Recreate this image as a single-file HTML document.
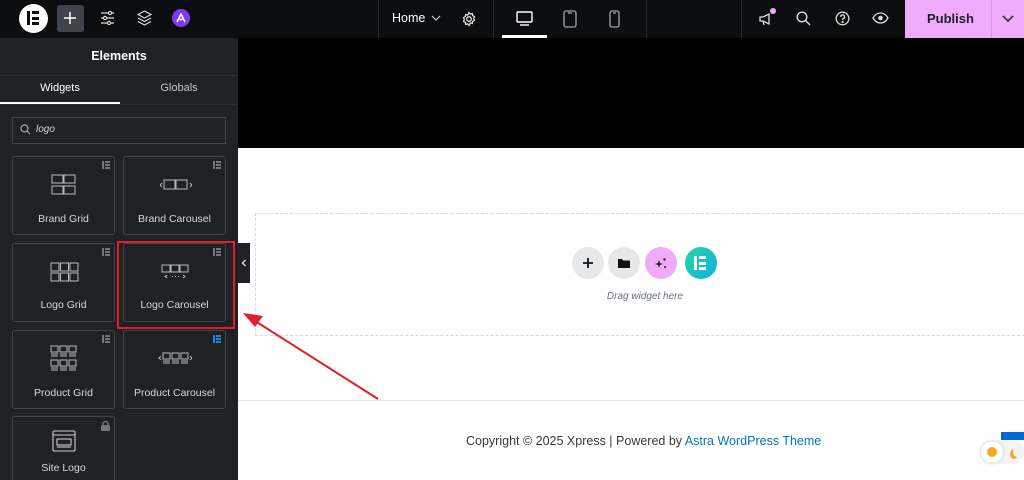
<!DOCTYPE html>
<html style="overflow:hidden;height:480px"><head><meta charset="utf-8"><style>
*{margin:0;padding:0;box-sizing:border-box}
body{width:1024px;height:480px;overflow:hidden;background:#fff;font-family:"Liberation Sans",sans-serif;position:relative}
.a{position:absolute}
.top{left:0;top:0;width:1024px;height:38px;background:#0c0d0e}
.side{left:0;top:38px;width:238px;height:442px;background:#1f2124}
.card{position:absolute;width:103px;border:1px solid #3f444b;border-radius:3px;color:#d5d8dc;font-size:10.5px;text-align:center}
.card .l{position:absolute;left:0;right:0}
.card .b{position:absolute;right:4px;top:4px}
svg{display:block}
</style></head><body>
<div class="a top"></div>
<div class="a" style="left:19px;top:4px;width:29px;height:29px;border-radius:50%;background:#fff"></div>
<div class="a" style="left:27px;top:11px;width:3px;height:14px;background:#0c0d0e"></div>
<div class="a" style="left:32px;top:11px;width:7px;height:3px;background:#0c0d0e"></div>
<div class="a" style="left:32px;top:16.5px;width:7px;height:3px;background:#0c0d0e"></div>
<div class="a" style="left:32px;top:22px;width:7px;height:3px;background:#0c0d0e"></div>
<div class="a" style="left:57px;top:5px;width:27px;height:27px;border-radius:3px;background:#3f444b"></div>
<svg class="a" style="left:63px;top:11px" width="14" height="14"><path d="M7 1v12M1 7h12" stroke="#fff" stroke-width="1.5"/></svg>
<svg class="a" style="left:100px;top:11px" width="15" height="14" fill="none" stroke="#ddd" stroke-width="1.2"><path d="M1 2h13M1 7h13M1 12h13"/><circle cx="10" cy="2" r="1.6" fill="#0c0d0e"/><circle cx="5" cy="7" r="1.6" fill="#0c0d0e"/><circle cx="9" cy="12" r="1.6" fill="#0c0d0e"/></svg>
<svg class="a" style="left:137px;top:10px" width="15" height="16" fill="none" stroke="#ddd" stroke-width="1.2"><path d="M7.5 1L14 4.5 7.5 8 1 4.5z"/><path d="M1 8l6.5 3.5L14 8M1 11.5l6.5 3.5 6.5-3.5"/></svg>
<div class="a" style="left:172px;top:9px;width:18px;height:18px;border-radius:50%;background:#7e3af2"></div>
<svg class="a" style="left:176px;top:13px" width="10" height="10"><path d="M1 9L5 1 9 9M3.5 6.5h3" stroke="#fff" stroke-width="1.6" fill="none"/></svg>
<div class="a" style="left:378px;top:0;width:1px;height:38px;background:#26292c"></div>
<div class="a" style="left:392px;top:11px;color:#fff;font-size:12.5px">Home</div>
<svg class="a" style="left:431px;top:15px" width="10" height="7"><path d="M1 1l4 4 4-4" stroke="#ccc" fill="none" stroke-width="1.2"/></svg>
<svg class="a" style="left:461px;top:11px" width="16" height="16" fill="none" stroke="#ddd" stroke-width="1.3"><circle cx="8" cy="8" r="2.3"/><path d="M8 1.5l1.3 1.6 2-.5.4 2 1.8 1-.9 1.9.9 1.9-1.8 1-.4 2-2-.5L8 14.5l-1.3-1.6-2 .5-.4-2-1.8-1 .9-1.9-.9-1.9 1.8-1 .4-2 2 .5z"/></svg>
<div class="a" style="left:493px;top:0;width:1px;height:38px;background:#26292c"></div>
<svg class="a" style="left:516px;top:11px" width="17" height="15" fill="none" stroke="#fff" stroke-width="1.4"><rect x="1" y="1" width="15" height="10" rx="1"/><path d="M4 14h9"/></svg>
<div class="a" style="left:502px;top:35px;width:45px;height:3px;background:#fff"></div>
<svg class="a" style="left:563px;top:10px" width="14" height="18" fill="none" stroke="#9da5ae" stroke-width="1.3"><rect x="1" y="1" width="12" height="16" rx="2"/><path d="M5 3h4"/></svg>
<svg class="a" style="left:609px;top:10px" width="11" height="18" fill="none" stroke="#9da5ae" stroke-width="1.3"><rect x="1" y="1" width="9" height="16" rx="2"/><path d="M4 3h3"/></svg>
<div class="a" style="left:646px;top:0;width:1px;height:38px;background:#26292c"></div>
<div class="a" style="left:741px;top:0;width:1px;height:38px;background:#26292c"></div>
<svg class="a" style="left:759px;top:11px" width="14" height="15" fill="none" stroke="#ddd" stroke-width="1.3"><path d="M1 6v4h3l6 3V3L4 6z M4 10l1 4"/></svg>
<div class="a" style="left:770px;top:8px;width:6px;height:6px;border-radius:50%;background:#f0abfc"></div>
<svg class="a" style="left:796px;top:11px" width="15" height="15" fill="none" stroke="#ddd" stroke-width="1.4"><circle cx="6" cy="6" r="4.8"/><path d="M9.5 9.5L14 14"/></svg>
<svg class="a" style="left:835px;top:11px" width="15" height="15" fill="none" stroke="#ddd" stroke-width="1.3"><circle cx="7.5" cy="7.5" r="6.3"/><path d="M5.5 5.8a2 2 0 1 1 2.5 2c-.5.2-.5.7-.5 1.3"/><circle cx="7.5" cy="11" r=".5" fill="#ddd"/></svg>
<svg class="a" style="left:872px;top:12px" width="17" height="12" fill="none" stroke="#ddd" stroke-width="1.3"><path d="M1 6c2-3.5 4.5-5 7.5-5s5.5 1.5 7.5 5c-2 3.5-4.5 5-7.5 5S3 9.5 1 6z"/><circle cx="8.5" cy="6" r="1.6" fill="#ddd"/></svg>
<div class="a" style="left:905px;top:0;width:119px;height:38px;background:#f0abfc"></div>
<div class="a" style="left:991px;top:0;width:1px;height:38px;background:#e290ec"></div>
<div class="a" style="left:927px;top:11px;font-size:13px;font-weight:bold;color:#1f1f24">Publish</div>
<svg class="a" style="left:1002px;top:15px" width="12" height="8"><path d="M1 1l5 5 5-5" stroke="#1f1f24" fill="none" stroke-width="1.5"/></svg>

<div class="a" style="left:238px;top:38px;width:786px;height:110px;background:#000"></div>
<div class="a" style="left:255px;top:213px;width:780px;height:123px;border:1px dashed #d5d8dc"></div>
<div class="a" style="left:572px;top:247px;width:32px;height:32px;border-radius:50%;background:#e6e7e8"></div>
<svg class="a" style="left:582px;top:257px" width="12" height="12"><path d="M6 1v10M1 6h10" stroke="#111" stroke-width="1.8"/></svg>
<div class="a" style="left:608px;top:247px;width:32px;height:32px;border-radius:50%;background:#e6e7e8"></div>
<svg class="a" style="left:618px;top:258px" width="12" height="10"><path d="M0 1h4l1 1.5h7V10H0z" fill="#111"/></svg>
<div class="a" style="left:645px;top:247px;width:32px;height:32px;border-radius:50%;background:#f0abfc"></div>
<svg class="a" style="left:655px;top:257px" width="12" height="12" fill="#222"><path d="M4 3l1 3 3 1-3 1-1 3-1-3-3-1 3-1z"/><circle cx="9.5" cy="2.5" r="1.2"/><circle cx="10" cy="10" r="1"/></svg>
<div class="a" style="left:685px;top:247px;width:32px;height:32px;border-radius:50%;background:linear-gradient(135deg,#2bd3a4,#0cb3df)"></div>
<div class="a" style="left:694px;top:256px;width:3px;height:14px;background:#fff"></div>
<div class="a" style="left:699px;top:256px;width:7px;height:3px;background:#fff"></div>
<div class="a" style="left:699px;top:261.5px;width:7px;height:3px;background:#fff"></div>
<div class="a" style="left:699px;top:267px;width:7px;height:3px;background:#fff"></div>
<div class="a" style="left:560px;top:291px;width:170px;text-align:center;font-size:10px;font-style:italic;color:#69727d">Drag widget here</div>
<div class="a" style="left:238px;top:400px;width:786px;height:1px;background:#e5e7eb"></div>
<div class="a" style="left:466px;top:434px;font-size:12.5px;color:#3a3a3a;white-space:nowrap">Copyright © 2025 Xpress | Powered by <span style="color:#0274be">Astra WordPress Theme</span></div>
<div class="a" style="left:1001px;top:432px;width:23px;height:8px;background:#0667d4"></div>
<div class="a" style="left:980px;top:440px;width:44px;height:24px;border-radius:12px;background:#f3f3f3"></div>
<div class="a" style="left:981px;top:441px;width:22px;height:22px;border-radius:50%;background:#fff;box-shadow:0 0 3px #ccc"></div>
<div class="a" style="left:987px;top:447px;width:10px;height:10px;border-radius:50%;background:#f5a623"></div>
<div class="a" style="left:1013px;top:447px;width:8px;height:10px;border-radius:50%;box-shadow:-3px 2px 0 0 #f5a623"></div>

<div class="a side"></div>
<div class="a" style="left:0;top:49px;width:238px;text-align:center;color:#fff;font-weight:bold;font-size:12.5px">Elements</div>
<div class="a" style="left:0;top:75px;width:238px;height:1px;background:#2d3035"></div>
<div class="a" style="left:0;top:82px;width:120px;text-align:center;color:#fff;font-size:11px">Widgets</div>
<div class="a" style="left:120px;top:82px;width:118px;text-align:center;color:#bfc4ca;font-size:11px">Globals</div>
<div class="a" style="left:0;top:102px;width:120px;height:2px;background:#fff"></div>
<div class="a" style="left:0;top:104px;width:238px;height:1px;background:#2d3035"></div>
<div class="a" style="left:12px;top:117px;width:214px;height:27px;border:1px solid #3f444b"></div>
<svg class="a" style="left:20px;top:124px" width="11" height="11" fill="none" stroke="#9da5ae" stroke-width="1.2"><circle cx="4.5" cy="4.5" r="3.5"/><path d="M7 7l3 3"/></svg>
<div class="a" style="left:36px;top:124px;font-size:10px;font-style:italic;color:#d5d8dc">logo</div>

<div class="a" style="left:238px;top:243px;width:12px;height:40px;background:#1f2124"></div>
<svg class="a" style="left:241px;top:259px" width="6" height="8"><path d="M4.5 1L1.5 4l3 3" stroke="#ddd" fill="none" stroke-width="1.4"/></svg>

<div class="card" style="left:12px;top:156px;height:79px"><svg class="b" width="8" height="8" fill="#6d7882"><path d="M0 0h2v8H0zM3 0h5v2H3zM3 3h5v2H3zM3 6h5v2H3z"/></svg>
<svg class="l" style="left:38px;top:17px" width="26" height="22" fill="none" stroke="#bbb" stroke-width="1"><rect x="1" y="1" width="11" height="8"/><rect x="13" y="1" width="11" height="8"/><rect x="1" y="12" width="11" height="8"/><rect x="13" y="12" width="11" height="8"/></svg>
<div class="l" style="top:56px">Brand Grid</div></div>
<div class="card" style="left:123px;top:156px;height:79px"><svg class="b" width="8" height="8" fill="#6d7882"><path d="M0 0h2v8H0zM3 0h5v2H3zM3 3h5v2H3zM3 6h5v2H3z"/></svg>
<svg class="l" style="left:36px;top:22px" width="32" height="12" fill="none" stroke="#bbb" stroke-width="1"><rect x="4" y="1" width="11" height="9"/><rect x="16" y="1" width="11" height="9"/><path d="M2 4L0 6l2 2M30 4l2 2-2 2"/></svg>
<div class="l" style="top:56px">Brand Carousel</div></div>
<div class="card" style="left:12px;top:243px;height:79px"><svg class="b" width="8" height="8" fill="#6d7882"><path d="M0 0h2v8H0zM3 0h5v2H3zM3 3h5v2H3zM3 6h5v2H3z"/></svg>
<svg class="l" style="left:37px;top:18px" width="29" height="20" fill="none" stroke="#bbb" stroke-width="1"><rect x="1" y="1" width="8" height="8"/><rect x="10.5" y="1" width="8" height="8"/><rect x="20" y="1" width="8" height="8"/><rect x="1" y="11" width="8" height="8"/><rect x="10.5" y="11" width="8" height="8"/><rect x="20" y="11" width="8" height="8"/></svg>
<div class="l" style="top:55px">Logo Grid</div></div>
<div class="card" style="left:123px;top:243px;height:79px"><svg class="b" width="8" height="8" fill="#6d7882"><path d="M0 0h2v8H0zM3 0h5v2H3zM3 3h5v2H3zM3 6h5v2H3z"/></svg>
<svg class="l" style="left:37px;top:20px" width="28" height="15" fill="none" stroke="#bbb" stroke-width="1"><rect x="1" y="1" width="8" height="7"/><rect x="10" y="1" width="8" height="7"/><rect x="19" y="1" width="8" height="7"/><path d="M6 11l-2 1.5 2 1.5M22 11l2 1.5-2 1.5M11 12.5h1M14 12.5h1M17 12.5h1"/></svg>
<div class="l" style="top:55px">Logo Carousel</div></div>
<div class="a" style="left:117px;top:241px;width:118px;height:88px;border:2px solid #e31e24"></div>
<div class="card" style="left:12px;top:330px;height:79px"><svg class="b" width="8" height="8" fill="#6d7882"><path d="M0 0h2v8H0zM3 0h5v2H3zM3 3h5v2H3zM3 6h5v2H3z"/></svg>
<svg class="l" style="left:37px;top:14px" width="28" height="28" fill="none" stroke="#bbb" stroke-width="1"><rect x="1" y="1" width="7" height="6"/><rect x="10" y="1" width="7" height="6"/><rect x="19" y="1" width="7" height="6"/><path d="M1 9h7M10 9h7M19 9h7M1 11h7M10 11h7M19 11h7"/><rect x="1" y="15" width="7" height="6"/><rect x="10" y="15" width="7" height="6"/><rect x="19" y="15" width="7" height="6"/><path d="M1 23h7M10 23h7M19 23h7M1 25h7M10 25h7M19 25h7"/></svg>
<div class="l" style="top:56px">Product Grid</div></div>
<div class="card" style="left:123px;top:330px;height:79px"><svg class="b" width="8" height="8" fill="#0c8ce9"><path d="M0 0h2v8H0zM3 0h5v2H3zM3 3h5v2H3zM3 6h5v2H3z"/></svg>
<svg class="l" style="left:34px;top:21px" width="34" height="14" fill="none" stroke="#bbb" stroke-width="1"><rect x="5" y="1" width="7" height="6"/><rect x="14" y="1" width="7" height="6"/><rect x="23" y="1" width="7" height="6"/><path d="M5 9h7M14 9h7M23 9h7M5 11h7M14 11h7M23 11h7M3 4L1 6l2 2M32 4l2 2-2 2"/></svg>
<div class="l" style="top:56px">Product Carousel</div></div>
<div class="card" style="left:12px;top:416px;height:64px;border-bottom:none;border-radius:3px 3px 0 0"><svg class="b" width="9" height="10" fill="#6d7882"><rect x="0" y="4" width="9" height="6" rx="1"/><path d="M2 4V3a2.5 2.5 0 0 1 5 0v1" stroke="#6d7882" fill="none" stroke-width="1.4"/></svg>
<svg class="l" style="left:39px;top:13px" width="24" height="22" fill="none" stroke="#ccc" stroke-width="1.1"><rect x="1" y="1" width="22" height="20" rx="1"/><path d="M1 5h22"/><rect x="5" y="9" width="14" height="6"/><path d="M5 17h14"/></svg>
<div class="l" style="top:45px">Site Logo</div></div>

<svg class="a" style="left:236px;top:300px" width="150" height="105"><path d="M142 99L16 19" stroke="#e31e24" stroke-width="2"/><path d="M7 13l20 3-8 11z" fill="#e31e24"/></svg>
</body></html>
